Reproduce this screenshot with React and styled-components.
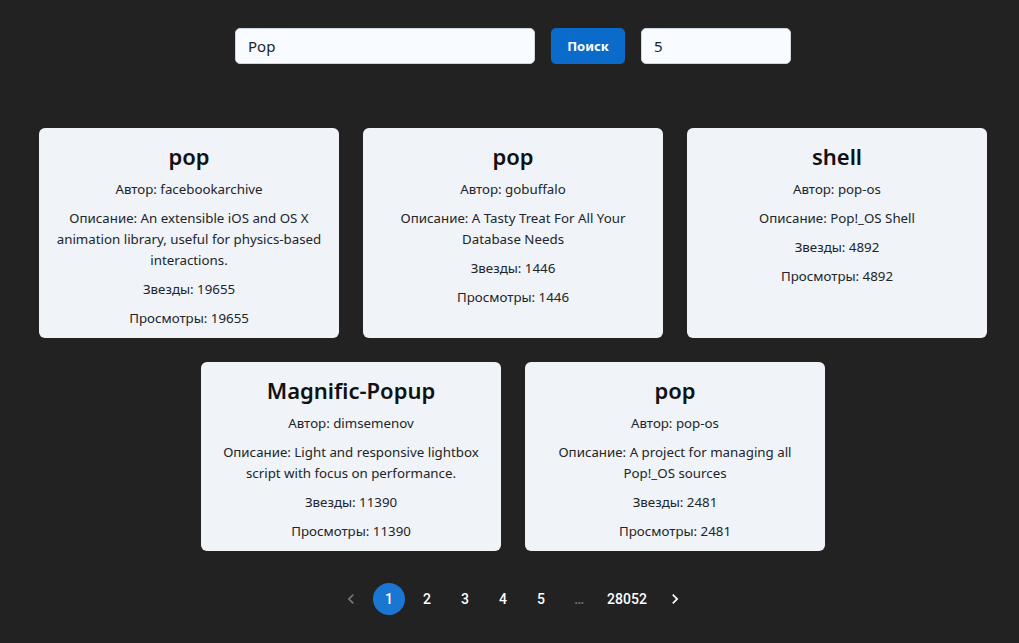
import styled, { createGlobalStyle } from "styled-components";

const GlobalStyle = createGlobalStyle`
  * { box-sizing: border-box; }
  body {
    margin: 0;
    background: #222222;
    font-family: "Segoe UI", "Noto Sans", "Open Sans", sans-serif;
  }
`;

const Page = styled.div`
  min-height: 643px;
  padding: 28px 0 0 7px;
  display: flex;
  flex-direction: column;
  align-items: center;
`;

const SearchBar = styled.form`
  display: flex;
  gap: 16px;
  height: 36px;
`;

const Input = styled.input`
  width: ${(p) => p.$width}px;
  height: 36px;
  border: 1px solid #ced4da;
  border-radius: 5px;
  background: #f8fbff;
  padding: 0 12px;
  font-family: inherit;
  font-size: 15px;
  color: #212529;
  outline: none;
`;

const SearchButton = styled.button`
  width: 74px;
  height: 36px;
  border: none;
  border-radius: 5px;
  background: #0b6bcb;
  color: #fff;
  font-family: inherit;
  font-weight: 700;
  font-size: 13px;
`;

const CardGrid = styled.div`
  margin-top: 64px;
  width: 948px;
  display: flex;
  flex-wrap: wrap;
  justify-content: center;
  gap: 24px;
`;

const Card = styled.div`
  width: 300px;
  background: #f0f3f8;
  border-radius: 6px;
  padding: 12px 14px 9px;
  display: flex;
  flex-direction: column;
  align-items: center;
  text-align: center;
  color: #212529;
`;

const Title = styled.h2`
  margin: 0 0 7px;
  font-size: 22px;
  line-height: 32px;
  font-weight: 600;
  color: #111;
`;

const Line = styled.p`
  margin: 0 0 8px;
  font-size: 13.3px;
  line-height: 21px;
  &:last-child { margin-bottom: 0; }
`;

const Pager = styled.nav`
  margin-top: 32px;
  display: flex;
  align-items: center;
  font-family: Roboto, sans-serif;
`;

const PageItem = styled.button`
  min-width: 32px;
  height: 32px;
  margin: 0 3px;
  padding: 0 6px;
  border: none;
  border-radius: 16px;
  background: ${(p) => (p.$active ? "#1976d2" : "transparent")};
  color: ${(p) => (p.$muted ? "rgba(255,255,255,0.38)" : "#fff")};
  font-family: Roboto, sans-serif;
  font-size: 14px;
  font-weight: 500;
  display: flex;
  align-items: center;
  justify-content: center;
`;

const repos = [
  {
    name: "pop",
    author: "facebookarchive",
    desc: "An extensible iOS and OS X animation library, useful for physics-based interactions.",
    stars: 19655,
  },
  { name: "pop", author: "gobuffalo", desc: "A Tasty Treat For All Your Database Needs", stars: 1446 },
  { name: "shell", author: "pop-os", desc: "Pop!_OS Shell", stars: 4892 },
  {
    name: "Magnific-Popup",
    author: "dimsemenov",
    desc: "Light and responsive lightbox script with focus on performance.",
    stars: 11390,
  },
  { name: "pop", author: "pop-os", desc: "A project for managing all Pop!_OS sources", stars: 2481 },
];

const Chevron = ({ dir }) => (
  <svg width="20" height="20" viewBox="0 0 24 24" fill="currentColor">
    {dir === "left" ? (
      <path d="M15.41 7.41 14 6l-6 6 6 6 1.41-1.41L10.83 12z" />
    ) : (
      <path d="M10 6 8.59 7.41 13.17 12l-4.58 4.59L10 18l6-6z" />
    )}
  </svg>
);

const App = () => {
  return (
    <>
      <GlobalStyle />
      <Page>
        <SearchBar onSubmit={(e) => e.preventDefault()}>
          <Input $width={300} defaultValue="Pop" />
          <SearchButton>Поиск</SearchButton>
          <Input $width={150} defaultValue="5" />
        </SearchBar>

        <CardGrid>
          {repos.map((repo, i) => (
            <Card key={i}>
              <Title>{repo.name}</Title>
              <Line>Автор: {repo.author}</Line>
              <Line>Описание: {repo.desc}</Line>
              <Line>Звезды: {repo.stars}</Line>
              <Line>Просмотры: {repo.stars}</Line>
            </Card>
          ))}
        </CardGrid>

        <Pager>
          <PageItem $muted>
            <Chevron dir="left" />
          </PageItem>
          <PageItem $active>1</PageItem>
          <PageItem>2</PageItem>
          <PageItem>3</PageItem>
          <PageItem>4</PageItem>
          <PageItem>5</PageItem>
          <PageItem $muted>…</PageItem>
          <PageItem>28052</PageItem>
          <PageItem>
            <Chevron dir="right" />
          </PageItem>
        </Pager>
      </Page>
    </>
  );
};

export default App;
